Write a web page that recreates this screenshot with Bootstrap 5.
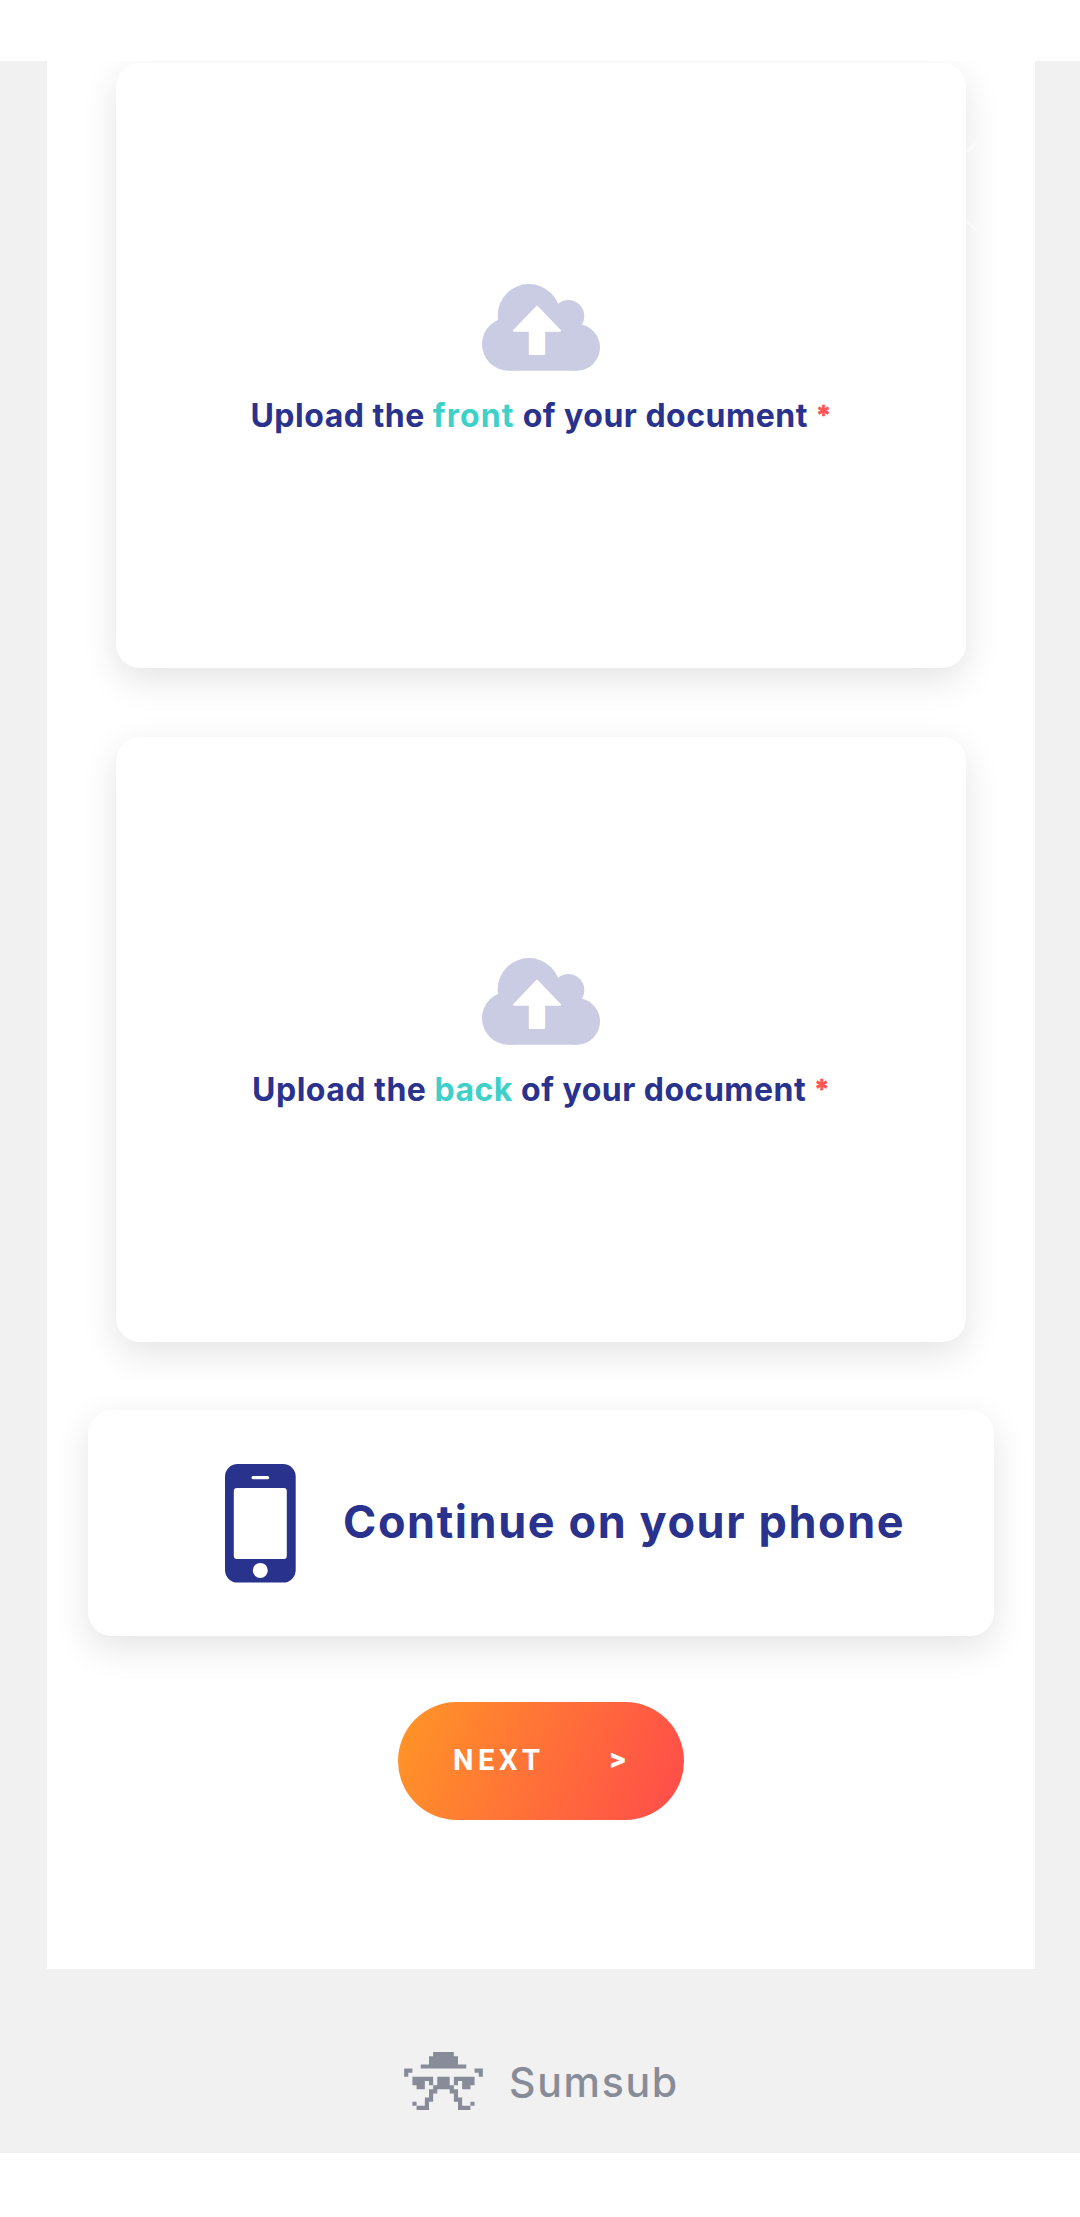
<!DOCTYPE html>
<html lang="en">
<head>
<meta charset="utf-8">
<meta name="viewport" content="width=device-width, initial-scale=1">
<title>Upload your document</title>
<link href="https://cdn.jsdelivr.net/npm/bootstrap@5.3.0/dist/css/bootstrap.min.css" rel="stylesheet">
<style>
  body { font-family: Inter, "Open Sans", sans-serif; color: #29328d; background: #fff; }
  .top-space { height: 61px; }
  .page-area { height: 2092px; background: #f1f1f1; }
  .panel { height: 1908px; margin: 0 45px 0 47px; padding-top: 2px; }
  .tile { border: 0; border-radius: 24px; background: #fff; box-shadow: 0 12px 36px rgba(0, 0, 0, .11); }
  .upload-tile { width: 850px; height: 605px; padding-top: 221px; margin-bottom: 69px; }
  .upload-tile + .upload-tile { margin-bottom: 68px; }
  .upload-text { font-size: 32px; line-height: 40px; letter-spacing: .5px; margin-top: 25px; }
  .side-name { color: #3fd0c9; }
  .side-front { letter-spacing: 1.1px; }
  .required { color: #ff5252; font-size: 27px; line-height: 0; vertical-align: 2px; -webkit-text-stroke: .5px #ff5252; }
  .phone-tile { width: 906px; height: 226px; padding-left: 137px; margin-bottom: 66px; }
  .phone-text { font-size: 45px; line-height: 60px; letter-spacing: 1.6px; margin: -2px 0 0 47px; }
  .next-btn { width: 286px; height: 118px; padding: 0 0 2px 55px; gap: 65px; border: 0; color: #fff;
    background: linear-gradient(111deg, #ff9626, #ff4b4b); font: 700 29px/34px Roboto, sans-serif; letter-spacing: 4.6px; }
  .next-btn:hover { color: #fff; }
  .next-arrow { font-size: 31px; -webkit-text-stroke: .3px #fff; }
  .maker { padding-top: 83px; padding-left: 404px; gap: 26px; color: #878c98; }
  .maker-name { font-size: 41px; font-weight: 500; line-height: 50px; letter-spacing: 1.7px; margin-top: 2px; }
  .close-mark { left: 919px; top: 79px; }
</style>
</head>
<body>
<svg class="d-none" xmlns="http://www.w3.org/2000/svg">
  <symbol id="cloud" viewBox="0 0 118 87">
    <g fill="#cacce3">
      <circle cx="26.5" cy="60.2" r="26.5"/><circle cx="47" cy="31.3" r="31.3"/>
      <circle cx="86.3" cy="32" r="16"/><circle cx="94.7" cy="63.4" r="23.3"/>
      <rect x="26" y="30" width="69" height="56.7"/>
    </g>
    <path d="M55 22.7 78 46.7H62.2V70H47.8V46.7H32Z" fill="#fff" stroke="#fff" stroke-width="2" stroke-linejoin="round"/>
  </symbol>
</svg>
<div class="top-space"></div>
<main class="page-area">
  <section class="panel bg-white position-relative overflow-hidden d-flex flex-column align-items-center">
    <div class="card tile upload-tile align-items-center">
      <svg width="118" height="87"><use href="#cloud"/></svg>
      <div class="upload-text fw-bold text-nowrap">Upload the <span class="side-name side-front">front</span> of your document <span class="required">*</span></div>
    </div>
    <div class="card tile upload-tile align-items-center">
      <svg width="118" height="87"><use href="#cloud"/></svg>
      <div class="upload-text fw-bold text-nowrap">Upload the <span class="side-name">back</span> of your document <span class="required">*</span></div>
    </div>
    <div class="card tile phone-tile flex-row align-items-center">
      <svg width="71" height="119" viewBox="0 0 71 119">
        <rect width="70.7" height="118.6" rx="12.5" fill="#29328d"/>
        <g fill="#fff"><rect x="26.5" y="12" width="17.7" height="3.2" rx="1.5"/><rect x="8.8" y="24" width="53" height="71" rx="3"/><circle cx="35.3" cy="106.4" r="7.5"/></g>
      </svg>
      <div class="phone-text fw-bold text-nowrap">Continue on your phone</div>
    </div>
    <button type="button" class="btn next-btn rounded-pill d-flex align-items-center"><span>NEXT</span><span class="next-arrow">&gt;</span></button>
    <svg class="close-mark position-absolute" width="14" height="94" fill="none" stroke="#fafafa" stroke-width="3.5" stroke-linecap="round"><path d="M2 11 9 4M2 82 9 89"/></svg>
  </section>
  <footer class="maker d-flex align-items-center">
    <svg width="79" height="58" viewBox="0 0 19 14" fill="currentColor">
      <path d="M7 0h5v1h1v2h2v1H4V3h2V1h1z"/>
      <path d="M0 4h2v1H1v1H0zM17 4h2v2h-1V5h-1z"/>
      <path d="M2 6h5v2H6V7H5v2H3V8H2zM12 6h5v2h-1v1h-2V7h-1v1h-1z"/>
      <path d="M8 6h3v2h1v1h1v2h1v2h2v1h-3v-2h-1v-2h-1V9H8v1H7v2H6v2H3v-1h2v-2h1V9h1V8h1z"/>
      <path d="M2 12h1v1H2zM16 12h1v1h-1z"/>
    </svg>
    <div class="maker-name">Sumsub</div>
  </footer>
</main>
<script src="https://cdn.jsdelivr.net/npm/bootstrap@5.3.0/dist/js/bootstrap.bundle.min.js"></script>
</body>
</html>
